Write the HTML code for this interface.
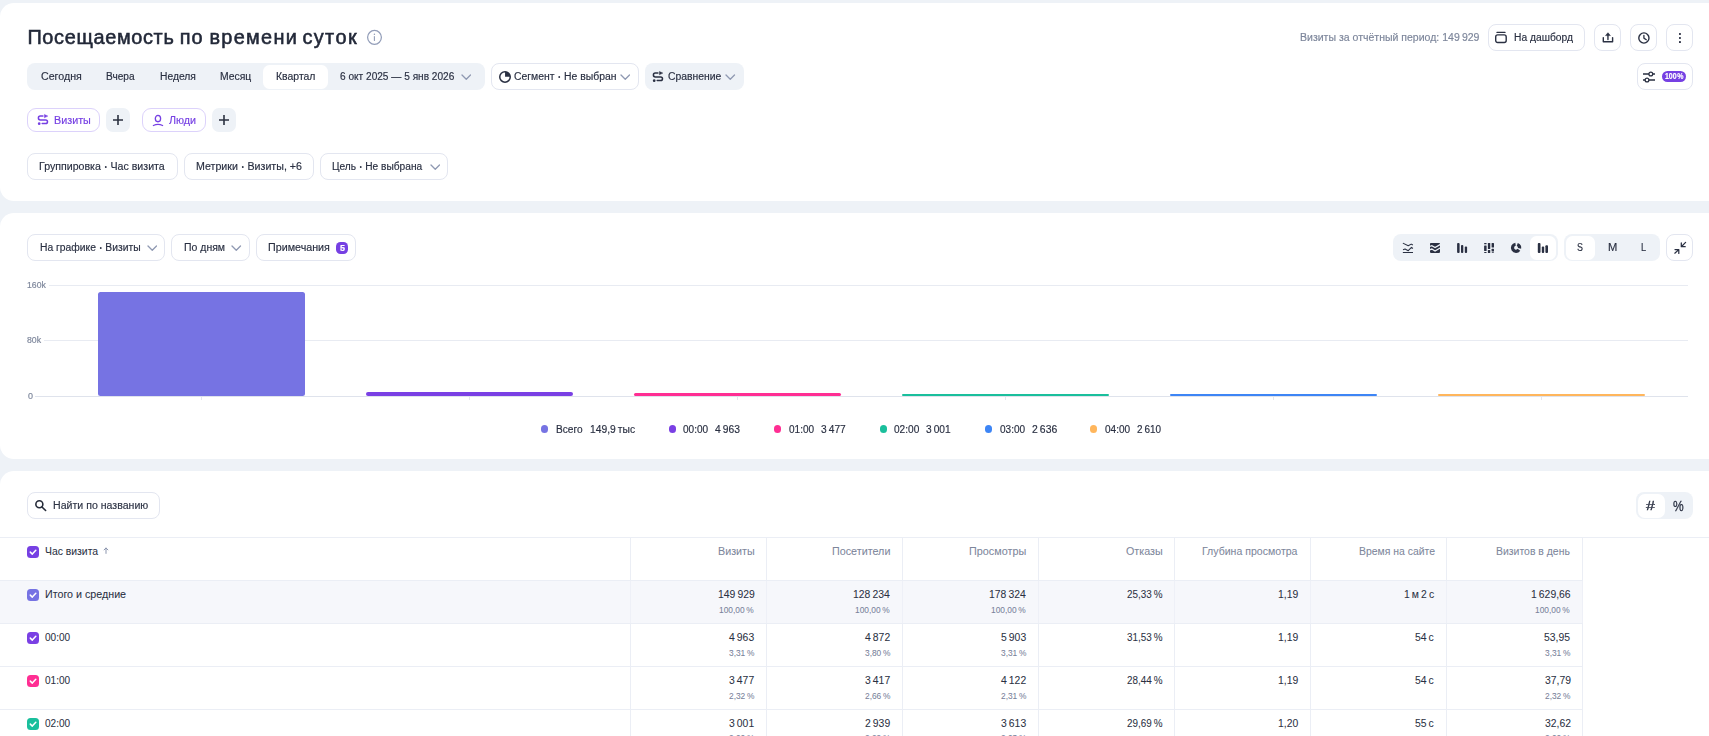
<!DOCTYPE html>
<html lang="ru"><head><meta charset="utf-8"><title>Посещаемость по времени суток</title>
<style>
html,body{margin:0;padding:0;}
html{background:#eef2f7;overflow:hidden;}
body{width:1709px;height:736px;overflow:hidden;background:#eef2f7;position:relative;font-family:"Liberation Sans", sans-serif;}
.b{position:absolute;box-sizing:border-box;display:block;}
.txt{position:absolute;left:0;top:0;width:1709px;height:530px;will-change:transform;}
.tbl{position:absolute;left:0;top:0;width:1709px;height:736px;}
.bu{font-size:.55em;line-height:0;position:relative;top:-1.3px;margin:0 .9px;}
.t{position:absolute;white-space:pre;transform-origin:0 0;line-height:16px;height:16px;font-family:"Liberation Sans", sans-serif;}
</style></head><body>
<div class="b " style="left:0px;top:3px;width:1729px;height:198px;background:#fff;border-radius:14px 0 0 14px;"></div>
<div class="b " style="left:0px;top:213px;width:1729px;height:246px;background:#fff;border-radius:14px 0 0 14px;"></div>
<div class="b " style="left:0px;top:471px;width:1729px;height:300px;background:#fff;border-radius:14px 0 0 0;"></div>
<svg class="b" style="left:366px;top:29px;" width="17" height="17" viewBox="0 0 17 17"><circle cx="8.5" cy="8.35" r="6.9" fill="none" stroke="#939eb9" stroke-width="1.25"/><rect x="7.85" y="6.9" width="1.15" height="5.2" rx="0.5" fill="#98a2bb"/><rect x="7.75" y="4.6" width="1.35" height="1.4" rx="0.6" fill="#98a2bb"/></svg>
<div class="b " style="left:27px;top:63px;width:458px;height:27px;background:#eef2f7;border-radius:8px;"></div>
<div class="b " style="left:263px;top:65px;width:65px;height:23.5px;background:#fff;border-radius:6.5px;"></div>
<svg class="b" style="left:460.95px;top:73.9px;" width="10.5" height="6.2" viewBox="0 0 10.5 6.2"><path d="M1 1 L5.25 5.2 L9.5 1" fill="none" stroke="#8f99b2" stroke-width="1.3" stroke-linecap="round" stroke-linejoin="round"/></svg>
<div class="b " style="left:491px;top:63px;width:148px;height:27px;background:#fff;border:1px solid #e3e6f0;border-radius:8px;"></div>
<svg class="b" style="left:498px;top:70px;" width="14" height="14" viewBox="0 0 14 14"><circle cx="7" cy="6.9" r="5.25" fill="none" stroke="#2a3042" stroke-width="1.5"/><path d="M7.05 6.7 L7.05 1.6 A5.2 5.2 0 0 1 12.2 6.7 Z" fill="#2a3042"/></svg>
<svg class="b" style="left:619.95px;top:73.9px;" width="10.5" height="6.2" viewBox="0 0 10.5 6.2"><path d="M1 1 L5.25 5.2 L9.5 1" fill="none" stroke="#8f99b2" stroke-width="1.3" stroke-linecap="round" stroke-linejoin="round"/></svg>
<div class="b " style="left:645px;top:63px;width:99px;height:27px;background:#eef2f7;border-radius:8px;"></div>
<svg class="b" style="left:652.2px;top:70.1px;" width="12" height="13" viewBox="0 0 12 13"><path d="M5.9 3.1H3.3A1.9 1.9 0 0 0 3.3 6.9H8.7A1.8 1.8 0 0 1 8.7 10.5H5.2" fill="none" stroke="#2a3042" stroke-width="1.5" stroke-linecap="round"/><circle cx="2.2" cy="10.7" r="1.35" fill="#2a3042"/><path d="M7.4 1.4V4.8L10.9 3.1Z" fill="#2a3042" stroke="#2a3042" stroke-width="0.4" stroke-linejoin="round"/></svg>
<svg class="b" style="left:725.05px;top:73.9px;" width="10.5" height="6.2" viewBox="0 0 10.5 6.2"><path d="M1 1 L5.25 5.2 L9.5 1" fill="none" stroke="#8f99b2" stroke-width="1.3" stroke-linecap="round" stroke-linejoin="round"/></svg>
<div class="b " style="left:27px;top:108px;width:73px;height:24px;background:#fff;border:1px solid #dcd2fb;border-radius:9px;"></div>
<svg class="b" style="left:37px;top:113px;" width="12" height="13" viewBox="0 0 12 13"><path d="M5.9 3.1H3.3A1.9 1.9 0 0 0 3.3 6.9H8.7A1.8 1.8 0 0 1 8.7 10.5H5.2" fill="none" stroke="#7640e3" stroke-width="1.5" stroke-linecap="round"/><circle cx="2.2" cy="10.7" r="1.35" fill="#7640e3"/><path d="M7.4 1.4V4.8L10.9 3.1Z" fill="#7640e3" stroke="#7640e3" stroke-width="0.4" stroke-linejoin="round"/></svg>
<div class="b " style="left:106px;top:108px;width:24px;height:24px;background:#eef2f7;border-radius:7px;"></div>
<svg class="b" style="left:111.8px;top:114px;" width="12" height="12" viewBox="0 0 12 12"><path d="M6 1V11M1 6H11" stroke="#2b3140" stroke-width="1.6" fill="none"/></svg>
<div class="b " style="left:142px;top:108px;width:64px;height:24px;background:#fff;border:1px solid #dcd2fb;border-radius:9px;"></div>
<svg class="b" style="left:152px;top:113px;" width="13" height="14" viewBox="0 0 13 14"><ellipse cx="5.96" cy="5.56" rx="2.65" ry="3.2" fill="none" stroke="#7640e3" stroke-width="1.3"/><path d="M1.4 12.5Q6 10.3 10.6 12.5" fill="none" stroke="#7640e3" stroke-width="1.3" stroke-linecap="round"/></svg>
<div class="b " style="left:212px;top:108px;width:24px;height:24px;background:#eef2f7;border-radius:7px;"></div>
<svg class="b" style="left:217.9px;top:114px;" width="12" height="12" viewBox="0 0 12 12"><path d="M6 1V11M1 6H11" stroke="#2b3140" stroke-width="1.6" fill="none"/></svg>
<div class="b " style="left:27px;top:153px;width:151px;height:27px;background:#fff;border:1px solid #e3e6f0;border-radius:8px;"></div>
<div class="b " style="left:184px;top:153px;width:130px;height:27px;background:#fff;border:1px solid #e3e6f0;border-radius:8px;"></div>
<div class="b " style="left:320px;top:153px;width:128px;height:27px;background:#fff;border:1px solid #e3e6f0;border-radius:8px;"></div>
<svg class="b" style="left:429.75px;top:163.9px;" width="10.5" height="6.2" viewBox="0 0 10.5 6.2"><path d="M1 1 L5.25 5.2 L9.5 1" fill="none" stroke="#8f99b2" stroke-width="1.3" stroke-linecap="round" stroke-linejoin="round"/></svg>
<div class="b " style="left:1488px;top:24px;width:97px;height:27px;background:#fff;border:1px solid #e3e6f0;border-radius:8px;"></div>
<svg class="b" style="left:1494px;top:31px;" width="14" height="14" viewBox="0 0 14 14"><rect x="1.7" y="3.9" width="10.5" height="7.6" rx="2" fill="none" stroke="#2a3042" stroke-width="1.4"/><path d="M3 1.4H11" stroke="#2a3042" stroke-width="1.3" stroke-linecap="round"/></svg>
<div class="b " style="left:1594px;top:24px;width:27px;height:27px;background:#fff;border:1px solid #e3e6f0;border-radius:8px;"></div>
<div class="b " style="left:1630px;top:24px;width:27px;height:27px;background:#fff;border:1px solid #e3e6f0;border-radius:8px;"></div>
<div class="b " style="left:1666px;top:24px;width:27px;height:27px;background:#fff;border:1px solid #e3e6f0;border-radius:8px;"></div>
<svg class="b" style="left:1601px;top:31px;" width="14" height="14" viewBox="0 0 14 14"><path d="M2.3 6.6V10.7H11.6V6.6" fill="none" stroke="#2a3042" stroke-width="1.4" stroke-linejoin="round" stroke-linecap="round"/><path d="M6.95 8.6V3.2" stroke="#2a3042" stroke-width="1.4" stroke-linecap="round"/><path d="M4.5 4.6L6.95 1.7L9.4 4.6Z" fill="#2a3042" stroke="#2a3042" stroke-width="0.5" stroke-linejoin="round"/></svg>
<svg class="b" style="left:1637px;top:31px;" width="14" height="14" viewBox="0 0 14 14"><circle cx="6.9" cy="7" r="5.1" fill="none" stroke="#2a3042" stroke-width="1.4"/><path d="M6.9 4.3V7.1L9.3 8.7" fill="none" stroke="#2a3042" stroke-width="1.3" stroke-linecap="round" stroke-linejoin="round"/></svg>
<svg class="b" style="left:1673px;top:31px;" width="14" height="14" viewBox="0 0 14 14"><rect x="6" y="2" width="1.9" height="1.9" rx="0.6" fill="#2a3042"/><rect x="6" y="6.05" width="1.9" height="1.9" rx="0.6" fill="#2a3042"/><rect x="6" y="10.1" width="1.9" height="1.9" rx="0.6" fill="#2a3042"/></svg>
<div class="b " style="left:1637px;top:63px;width:56px;height:27px;background:#fff;border:1px solid #e3e6f0;border-radius:8px;"></div>
<svg class="b" style="left:1642px;top:70px;" width="14" height="14" viewBox="0 0 14 14"><path d="M1 4H13M1 10H13" stroke="#2a3042" stroke-width="1.3"/><circle cx="8.8" cy="4" r="1.9" fill="#fff" stroke="#2a3042" stroke-width="1.3"/><circle cx="5" cy="10" r="1.9" fill="#fff" stroke="#2a3042" stroke-width="1.3"/></svg>
<div class="b " style="left:1662px;top:71px;width:24px;height:11px;background:#7640e3;border-radius:5.5px;"></div>
<div class="b " style="left:27px;top:234px;width:138px;height:27px;background:#fff;border:1px solid #e3e6f0;border-radius:8px;"></div>
<svg class="b" style="left:146.75px;top:244.9px;" width="10.5" height="6.2" viewBox="0 0 10.5 6.2"><path d="M1 1 L5.25 5.2 L9.5 1" fill="none" stroke="#8f99b2" stroke-width="1.3" stroke-linecap="round" stroke-linejoin="round"/></svg>
<div class="b " style="left:171px;top:234px;width:79px;height:27px;background:#fff;border:1px solid #e3e6f0;border-radius:8px;"></div>
<svg class="b" style="left:231.25px;top:244.9px;" width="10.5" height="6.2" viewBox="0 0 10.5 6.2"><path d="M1 1 L5.25 5.2 L9.5 1" fill="none" stroke="#8f99b2" stroke-width="1.3" stroke-linecap="round" stroke-linejoin="round"/></svg>
<div class="b " style="left:256px;top:234px;width:100px;height:27px;background:#fff;border:1px solid #e3e6f0;border-radius:8px;"></div>
<div class="b " style="left:335.9px;top:242px;width:11.9px;height:11.9px;background:#7640e3;border-radius:4.5px;"></div>
<div class="b " style="left:1393px;top:234px;width:164.5px;height:27px;background:#eef2f7;border-radius:8px;"></div>
<div class="b " style="left:1529.5px;top:236px;width:26.5px;height:23.5px;background:#fff;border-radius:6.5px;"></div>
<div class="b " style="left:1564px;top:234px;width:96px;height:27px;background:#eef2f7;border-radius:8px;"></div>
<div class="b " style="left:1565.5px;top:236px;width:29px;height:23.5px;background:#fff;border-radius:6.5px;"></div>
<div class="b " style="left:1666px;top:234px;width:27px;height:27px;background:#fff;border:1px solid #e3e6f0;border-radius:8px;"></div>
<svg class="b" style="left:1393px;top:234px;" width="165" height="27" viewBox="0 0 165 27"><path d="M9.85 9.10 L15.25 11.80 L18.20 10.10 L19.90 11.05" fill="none" stroke="#2a3042" stroke-width="1.05" stroke-linejoin="round"/><path d="M10.00 15.70 L12.05 15.00 L15.25 16.70 L18.45 13.30 L19.90 14.50" fill="none" stroke="#2a3042" stroke-width="1.05" stroke-linejoin="round"/><path d="M9.85 18.50 L20.00 18.50" fill="none" stroke="#2a3042" stroke-width="1"/><rect x="37" y="9" width="10" height="9.9" rx="0.8" fill="#2a3042"/><path d="M36.50 12.50 L38.85 11.60 L42.05 13.55 L47.50 10.40" fill="none" stroke="#eef2f7" stroke-width="1.25"/><path d="M36.50 15.95 L38.85 15.05 L42.05 16.95 L47.50 13.75" fill="none" stroke="#eef2f7" stroke-width="1.25"/><rect x="64.10" y="9.10" width="2.50" height="9.90" rx="0.9" fill="#2a3042"/><rect x="68.00" y="11.00" width="2.30" height="8.00" rx="0.9" fill="#2a3042"/><rect x="71.80" y="12.50" width="2.30" height="6.50" rx="0.9" fill="#2a3042"/><rect x="91.10" y="9.00" width="2.50" height="1.30" rx="0.5" fill="#2a3042"/><rect x="91.10" y="11.40" width="2.50" height="5.60" rx="0.5" fill="#2a3042"/><rect x="91.10" y="17.90" width="2.50" height="1.10" rx="0.5" fill="#2a3042"/><rect x="94.90" y="9.00" width="2.35" height="5.90" rx="0.5" fill="#2a3042"/><rect x="94.90" y="16.00" width="2.35" height="3.00" rx="0.5" fill="#2a3042"/><rect x="98.60" y="9.00" width="2.40" height="4.60" rx="0.5" fill="#2a3042"/><rect x="98.60" y="14.80" width="2.40" height="2.80" rx="0.5" fill="#2a3042"/><rect x="98.60" y="18.30" width="2.40" height="0.70" rx="0.5" fill="#2a3042"/><path d="M124.26 10.41A3.55 3.55 0 0 1 126.55 14.37" fill="none" stroke="#2a3042" stroke-width="3.2"/><path d="M125.96 15.79A3.55 3.55 0 1 1 122.56 10.23" fill="none" stroke="#2a3042" stroke-width="3.2"/><rect x="144.80" y="9.10" width="2.70" height="9.90" rx="0.9" fill="#2a3042"/><rect x="148.80" y="12.50" width="2.40" height="6.50" rx="0.9" fill="#2a3042"/><rect x="152.40" y="11.30" width="2.60" height="7.70" rx="0.9" fill="#2a3042"/></svg>
<svg class="b" style="left:1666px;top:234px;" width="27" height="27" viewBox="0 0 27 27"><g fill="none" stroke="#2a3042" stroke-width="1.25" stroke-linecap="round" stroke-linejoin="round"><path d="M19.6 8.4L15.3 12.7M15.3 8.9V12.7H19.2"/><path d="M8.8 19.2L12.8 15.6M9 15.6H12.8V19.4"/></g></svg>
<div class="b " style="left:49px;top:285px;width:1639px;height:1px;background:#e8ebf2;"></div>
<div class="b " style="left:44px;top:340px;width:1644px;height:1px;background:#e8ebf2;"></div>
<div class="b " style="left:35px;top:396px;width:1653px;height:1px;background:#dfe3ec;"></div>
<div class="b " style="left:97.6px;top:291.5px;width:207.6px;height:104.5px;background:#7673e3;border-radius:2.5px;"></div>
<div class="b " style="left:200.9px;top:397px;width:1px;height:3px;background:#e4e7ee;"></div>
<div class="b " style="left:365.9px;top:392px;width:207.6px;height:4px;background:#7a40e4;border-radius:2px;"></div>
<div class="b " style="left:469.2px;top:397px;width:1px;height:3px;background:#e4e7ee;"></div>
<div class="b " style="left:633.8px;top:393.4px;width:207.6px;height:2.6px;background:#ff2e93;border-radius:2px;"></div>
<div class="b " style="left:737.1px;top:397px;width:1px;height:3px;background:#e4e7ee;"></div>
<div class="b " style="left:901.8px;top:393.7px;width:207.6px;height:2.3px;background:#1abf9c;border-radius:2px;"></div>
<div class="b " style="left:1005.1px;top:397px;width:1px;height:3px;background:#e4e7ee;"></div>
<div class="b " style="left:1169.5px;top:394px;width:207.6px;height:2px;background:#3d85f5;border-radius:2px;"></div>
<div class="b " style="left:1272.8px;top:397px;width:1px;height:3px;background:#e4e7ee;"></div>
<div class="b " style="left:1437.8px;top:394px;width:207.6px;height:2px;background:#ffb65c;border-radius:2px;"></div>
<div class="b " style="left:1541.1px;top:397px;width:1px;height:3px;background:#e4e7ee;"></div>
<div class="b " style="left:540.6px;top:425.4px;width:7.4px;height:7.4px;background:#7673e3;border-radius:4px;"></div>
<div class="b " style="left:668.9px;top:425.4px;width:7.4px;height:7.4px;background:#7a40e4;border-radius:4px;"></div>
<div class="b " style="left:774.0px;top:425.4px;width:7.4px;height:7.4px;background:#ff2e93;border-radius:4px;"></div>
<div class="b " style="left:879.8px;top:425.4px;width:7.4px;height:7.4px;background:#1abf9c;border-radius:4px;"></div>
<div class="b " style="left:984.9px;top:425.4px;width:7.4px;height:7.4px;background:#3d85f5;border-radius:4px;"></div>
<div class="b " style="left:1090.1px;top:425.4px;width:7.4px;height:7.4px;background:#ffb65c;border-radius:4px;"></div>
<div class="b " style="left:27px;top:492px;width:133px;height:27px;background:#fff;border:1px solid #e3e6f0;border-radius:8px;"></div>
<svg class="b" style="left:34px;top:499px;" width="14" height="14" viewBox="0 0 14 14"><circle cx="5.36" cy="5.3" r="3.5" fill="none" stroke="#262c3a" stroke-width="1.6"/><path d="M8 7.95L11.6 11.5" stroke="#262c3a" stroke-width="1.6" stroke-linecap="round"/></svg>
<div class="b " style="left:1636px;top:492px;width:57px;height:27px;background:#eef2f7;border-radius:8px;"></div>
<div class="b " style="left:1637.7px;top:493.7px;width:27.4px;height:24.3px;background:#fff;border-radius:7px;"></div>
<div class="b " style="left:0px;top:581px;width:1582px;height:42px;background:#f6f7fb;"></div>
<div class="b " style="left:0px;top:537px;width:1709px;height:1px;background:#ebeef5;"></div>
<div class="b " style="left:0px;top:580px;width:1583px;height:1px;background:#ebeef5;"></div>
<div class="b " style="left:0px;top:623px;width:1583px;height:1px;background:#ebeef5;"></div>
<div class="b " style="left:0px;top:666px;width:1583px;height:1px;background:#ebeef5;"></div>
<div class="b " style="left:0px;top:709px;width:1583px;height:1px;background:#ebeef5;"></div>
<div class="b " style="left:630px;top:538px;width:1px;height:200px;background:#ebeef5;"></div>
<div class="b " style="left:630px;top:581px;width:1px;height:42px;background:#eef0f7;"></div>
<div class="b " style="left:766px;top:538px;width:1px;height:200px;background:#ebeef5;"></div>
<div class="b " style="left:766px;top:581px;width:1px;height:42px;background:#eef0f7;"></div>
<div class="b " style="left:902px;top:538px;width:1px;height:200px;background:#ebeef5;"></div>
<div class="b " style="left:902px;top:581px;width:1px;height:42px;background:#eef0f7;"></div>
<div class="b " style="left:1038px;top:538px;width:1px;height:200px;background:#ebeef5;"></div>
<div class="b " style="left:1038px;top:581px;width:1px;height:42px;background:#eef0f7;"></div>
<div class="b " style="left:1174px;top:538px;width:1px;height:200px;background:#ebeef5;"></div>
<div class="b " style="left:1174px;top:581px;width:1px;height:42px;background:#eef0f7;"></div>
<div class="b " style="left:1310px;top:538px;width:1px;height:200px;background:#ebeef5;"></div>
<div class="b " style="left:1310px;top:581px;width:1px;height:42px;background:#eef0f7;"></div>
<div class="b " style="left:1446px;top:538px;width:1px;height:200px;background:#ebeef5;"></div>
<div class="b " style="left:1446px;top:581px;width:1px;height:42px;background:#eef0f7;"></div>
<div class="b " style="left:1582px;top:538px;width:1px;height:200px;background:#ebeef5;"></div>
<div class="b " style="left:1582px;top:581px;width:1px;height:42px;background:#eef0f7;"></div>
<div class="b " style="left:27px;top:546px;width:12px;height:12px;background:#7640e3;border-radius:3.5px;"></div>
<svg class="b" style="left:27px;top:546px;" width="12" height="12" viewBox="0 0 12 12"><path d="M3.3 6.1L5.3 8.1L8.8 4.3" fill="none" stroke="#fff" stroke-width="1.5" stroke-linecap="round" stroke-linejoin="round"/></svg>
<svg class="b" style="left:102px;top:546px;" width="8" height="10" viewBox="0 0 8 10"><path d="M4 7.4V2.1M2.1 3.9L4 1.95L5.9 3.9" fill="none" stroke="#8b95ae" stroke-width="1" stroke-linecap="round" stroke-linejoin="round"/></svg>
<div class="b " style="left:27px;top:589px;width:12px;height:12px;background:#7673e3;border-radius:3.5px;"></div>
<svg class="b" style="left:27px;top:589px;" width="12" height="12" viewBox="0 0 12 12"><path d="M3.3 6.1L5.3 8.1L8.8 4.3" fill="none" stroke="#fff" stroke-width="1.5" stroke-linecap="round" stroke-linejoin="round"/></svg>
<div class="b " style="left:27px;top:632px;width:12px;height:12px;background:#7a40e4;border-radius:3.5px;"></div>
<svg class="b" style="left:27px;top:632px;" width="12" height="12" viewBox="0 0 12 12"><path d="M3.3 6.1L5.3 8.1L8.8 4.3" fill="none" stroke="#fff" stroke-width="1.5" stroke-linecap="round" stroke-linejoin="round"/></svg>
<div class="b " style="left:27px;top:675px;width:12px;height:12px;background:#ff2e93;border-radius:3.5px;"></div>
<svg class="b" style="left:27px;top:675px;" width="12" height="12" viewBox="0 0 12 12"><path d="M3.3 6.1L5.3 8.1L8.8 4.3" fill="none" stroke="#fff" stroke-width="1.5" stroke-linecap="round" stroke-linejoin="round"/></svg>
<div class="b " style="left:27px;top:718px;width:12px;height:12px;background:#1abf9c;border-radius:3.5px;"></div>
<svg class="b" style="left:27px;top:718px;" width="12" height="12" viewBox="0 0 12 12"><path d="M3.3 6.1L5.3 8.1L8.8 4.3" fill="none" stroke="#fff" stroke-width="1.5" stroke-linecap="round" stroke-linejoin="round"/></svg>
<div class="tbl">
<span class="t" style="left:45.40px;top:543px;font-size:11.7px;color:#2a3042;transform:scaleX(0.8883);-webkit-text-stroke:0.06px #2a3042;">Час визита</span>
<span class="t" style="left:717.80px;top:543px;font-size:11.7px;color:#7d869b;transform:scaleX(0.9175);-webkit-text-stroke:0.06px #7d869b;">Визиты</span>
<span class="t" style="left:832.20px;top:543px;font-size:11.7px;color:#7d869b;transform:scaleX(0.9207);-webkit-text-stroke:0.06px #7d869b;">Посетители</span>
<span class="t" style="left:969.20px;top:543px;font-size:11.7px;color:#7d869b;transform:scaleX(0.9271);-webkit-text-stroke:0.06px #7d869b;">Просмотры</span>
<span class="t" style="left:1125.80px;top:543px;font-size:11.7px;color:#7d869b;transform:scaleX(0.9180);-webkit-text-stroke:0.06px #7d869b;">Отказы</span>
<span class="t" style="left:1202.20px;top:543px;font-size:11.7px;color:#7d869b;transform:scaleX(0.9031);-webkit-text-stroke:0.06px #7d869b;">Глубина просмотра</span>
<span class="t" style="left:1358.60px;top:543px;font-size:11.7px;color:#7d869b;transform:scaleX(0.8914);-webkit-text-stroke:0.06px #7d869b;">Время на сайте</span>
<span class="t" style="left:1496.30px;top:543px;font-size:11.7px;color:#7d869b;transform:scaleX(0.8933);-webkit-text-stroke:0.06px #7d869b;">Визитов в день</span>
<span class="t" style="left:45.40px;top:586px;font-size:11.7px;color:#2a3042;transform:scaleX(0.9155);-webkit-text-stroke:0.06px #2a3042;">Итого и средние</span>
<span class="t" style="left:717.93px;top:586px;font-size:11.7px;color:#2a3042;transform:scaleX(0.8880);-webkit-text-stroke:0.06px #2a3042;">149 929</span>
<span class="t" style="left:719.36px;top:602px;font-size:9.9px;color:#78819a;transform:scaleX(0.8460);-webkit-text-stroke:0.06px #78819a;">100,00 %</span>
<span class="t" style="left:853.05px;top:586px;font-size:11.7px;color:#2a3042;transform:scaleX(0.8880);-webkit-text-stroke:0.06px #2a3042;">128 234</span>
<span class="t" style="left:855.36px;top:602px;font-size:9.9px;color:#78819a;transform:scaleX(0.8460);-webkit-text-stroke:0.06px #78819a;">100,00 %</span>
<span class="t" style="left:989.05px;top:586px;font-size:11.7px;color:#2a3042;transform:scaleX(0.8880);-webkit-text-stroke:0.06px #2a3042;">178 324</span>
<span class="t" style="left:991.36px;top:602px;font-size:9.9px;color:#78819a;transform:scaleX(0.8460);-webkit-text-stroke:0.06px #78819a;">100,00 %</span>
<span class="t" style="left:1127.02px;top:586px;font-size:11.7px;color:#2a3042;transform:scaleX(0.8460);-webkit-text-stroke:0.06px #2a3042;">25,33 %</span>
<span class="t" style="left:1278.44px;top:586px;font-size:11.7px;color:#2a3042;transform:scaleX(0.8880);-webkit-text-stroke:0.06px #2a3042;">1,19</span>
<span class="t" style="left:1403.96px;top:586px;font-size:11.7px;color:#2a3042;transform:scaleX(0.8880);-webkit-text-stroke:0.06px #2a3042;">1 м 2 с</span>
<span class="t" style="left:1531.05px;top:586px;font-size:11.7px;color:#2a3042;transform:scaleX(0.8880);-webkit-text-stroke:0.06px #2a3042;">1 629,66</span>
<span class="t" style="left:1535.36px;top:602px;font-size:9.9px;color:#78819a;transform:scaleX(0.8460);-webkit-text-stroke:0.06px #78819a;">100,00 %</span>
<span class="t" style="left:45.40px;top:629px;font-size:11.7px;color:#2a3042;transform:scaleX(0.8606);-webkit-text-stroke:0.06px #2a3042;">00:00</span>
<span class="t" style="left:729.48px;top:629px;font-size:11.7px;color:#2a3042;transform:scaleX(0.8880);-webkit-text-stroke:0.06px #2a3042;">4 963</span>
<span class="t" style="left:728.65px;top:645px;font-size:9.9px;color:#78819a;transform:scaleX(0.8460);-webkit-text-stroke:0.06px #78819a;">3,31 %</span>
<span class="t" style="left:865.48px;top:629px;font-size:11.7px;color:#2a3042;transform:scaleX(0.8880);-webkit-text-stroke:0.06px #2a3042;">4 872</span>
<span class="t" style="left:864.65px;top:645px;font-size:9.9px;color:#78819a;transform:scaleX(0.8460);-webkit-text-stroke:0.06px #78819a;">3,80 %</span>
<span class="t" style="left:1001.48px;top:629px;font-size:11.7px;color:#2a3042;transform:scaleX(0.8880);-webkit-text-stroke:0.06px #2a3042;">5 903</span>
<span class="t" style="left:1000.65px;top:645px;font-size:9.9px;color:#78819a;transform:scaleX(0.8460);-webkit-text-stroke:0.06px #78819a;">3,31 %</span>
<span class="t" style="left:1127.02px;top:629px;font-size:11.7px;color:#2a3042;transform:scaleX(0.8460);-webkit-text-stroke:0.06px #2a3042;">31,53 %</span>
<span class="t" style="left:1278.44px;top:629px;font-size:11.7px;color:#2a3042;transform:scaleX(0.8880);-webkit-text-stroke:0.06px #2a3042;">1,19</span>
<span class="t" style="left:1415.25px;top:629px;font-size:11.7px;color:#2a3042;transform:scaleX(0.8880);-webkit-text-stroke:0.06px #2a3042;">54 с</span>
<span class="t" style="left:1543.78px;top:629px;font-size:11.7px;color:#2a3042;transform:scaleX(0.8880);-webkit-text-stroke:0.06px #2a3042;">53,95</span>
<span class="t" style="left:1544.65px;top:645px;font-size:9.9px;color:#78819a;transform:scaleX(0.8460);-webkit-text-stroke:0.06px #78819a;">3,31 %</span>
<span class="t" style="left:45.40px;top:672px;font-size:11.7px;color:#2a3042;transform:scaleX(0.8606);-webkit-text-stroke:0.06px #2a3042;">01:00</span>
<span class="t" style="left:729.48px;top:672px;font-size:11.7px;color:#2a3042;transform:scaleX(0.8880);-webkit-text-stroke:0.06px #2a3042;">3 477</span>
<span class="t" style="left:728.65px;top:688px;font-size:9.9px;color:#78819a;transform:scaleX(0.8460);-webkit-text-stroke:0.06px #78819a;">2,32 %</span>
<span class="t" style="left:865.48px;top:672px;font-size:11.7px;color:#2a3042;transform:scaleX(0.8880);-webkit-text-stroke:0.06px #2a3042;">3 417</span>
<span class="t" style="left:864.65px;top:688px;font-size:9.9px;color:#78819a;transform:scaleX(0.8460);-webkit-text-stroke:0.06px #78819a;">2,66 %</span>
<span class="t" style="left:1001.48px;top:672px;font-size:11.7px;color:#2a3042;transform:scaleX(0.8880);-webkit-text-stroke:0.06px #2a3042;">4 122</span>
<span class="t" style="left:1000.65px;top:688px;font-size:9.9px;color:#78819a;transform:scaleX(0.8460);-webkit-text-stroke:0.06px #78819a;">2,31 %</span>
<span class="t" style="left:1127.02px;top:672px;font-size:11.7px;color:#2a3042;transform:scaleX(0.8460);-webkit-text-stroke:0.06px #2a3042;">28,44 %</span>
<span class="t" style="left:1278.44px;top:672px;font-size:11.7px;color:#2a3042;transform:scaleX(0.8880);-webkit-text-stroke:0.06px #2a3042;">1,19</span>
<span class="t" style="left:1415.25px;top:672px;font-size:11.7px;color:#2a3042;transform:scaleX(0.8880);-webkit-text-stroke:0.06px #2a3042;">54 с</span>
<span class="t" style="left:1544.67px;top:672px;font-size:11.7px;color:#2a3042;transform:scaleX(0.8880);-webkit-text-stroke:0.06px #2a3042;">37,79</span>
<span class="t" style="left:1544.65px;top:688px;font-size:9.9px;color:#78819a;transform:scaleX(0.8460);-webkit-text-stroke:0.06px #78819a;">2,32 %</span>
<span class="t" style="left:45.40px;top:715px;font-size:11.7px;color:#2a3042;transform:scaleX(0.8606);-webkit-text-stroke:0.06px #2a3042;">02:00</span>
<span class="t" style="left:729.48px;top:715px;font-size:11.7px;color:#2a3042;transform:scaleX(0.8880);-webkit-text-stroke:0.06px #2a3042;">3 001</span>
<span class="t" style="left:728.65px;top:730px;font-size:9.9px;color:#78819a;transform:scaleX(0.8460);-webkit-text-stroke:0.06px #78819a;">2,00 %</span>
<span class="t" style="left:865.48px;top:715px;font-size:11.7px;color:#2a3042;transform:scaleX(0.8880);-webkit-text-stroke:0.06px #2a3042;">2 939</span>
<span class="t" style="left:864.65px;top:730px;font-size:9.9px;color:#78819a;transform:scaleX(0.8460);-webkit-text-stroke:0.06px #78819a;">2,29 %</span>
<span class="t" style="left:1001.48px;top:715px;font-size:11.7px;color:#2a3042;transform:scaleX(0.8880);-webkit-text-stroke:0.06px #2a3042;">3 613</span>
<span class="t" style="left:1000.65px;top:730px;font-size:9.9px;color:#78819a;transform:scaleX(0.8460);-webkit-text-stroke:0.06px #78819a;">2,03 %</span>
<span class="t" style="left:1127.02px;top:715px;font-size:11.7px;color:#2a3042;transform:scaleX(0.8460);-webkit-text-stroke:0.06px #2a3042;">29,69 %</span>
<span class="t" style="left:1277.56px;top:715px;font-size:11.7px;color:#2a3042;transform:scaleX(0.8880);-webkit-text-stroke:0.06px #2a3042;">1,20</span>
<span class="t" style="left:1415.25px;top:715px;font-size:11.7px;color:#2a3042;transform:scaleX(0.8880);-webkit-text-stroke:0.06px #2a3042;">55 с</span>
<span class="t" style="left:1544.67px;top:715px;font-size:11.7px;color:#2a3042;transform:scaleX(0.8880);-webkit-text-stroke:0.06px #2a3042;">32,62</span>
<span class="t" style="left:1544.65px;top:730px;font-size:9.9px;color:#78819a;transform:scaleX(0.8460);-webkit-text-stroke:0.06px #78819a;">2,00 %</span>
</div>
<div class="txt">
<span class="t" style="left:27.40px;top:29px;font-size:19.9px;color:#222838;letter-spacing:0.668px;-webkit-text-stroke:0.55px #222838;">Посещаемость</span>
<span class="t" style="left:179.80px;top:29px;font-size:19.9px;color:#222838;letter-spacing:0.829px;-webkit-text-stroke:0.55px #222838;">по</span>
<span class="t" style="left:209.40px;top:29px;font-size:19.9px;color:#222838;letter-spacing:1.315px;-webkit-text-stroke:0.55px #222838;">времени</span>
<span class="t" style="left:302.40px;top:29px;font-size:19.9px;color:#222838;letter-spacing:1.415px;-webkit-text-stroke:0.55px #222838;">суток</span>
<span class="t" style="left:40.70px;top:68px;font-size:11.7px;color:#2a3042;transform:scaleX(0.9109);-webkit-text-stroke:0.18px #2a3042;">Сегодня</span>
<span class="t" style="left:106.00px;top:68px;font-size:11.7px;color:#2a3042;transform:scaleX(0.8658);-webkit-text-stroke:0.18px #2a3042;">Вчера</span>
<span class="t" style="left:159.60px;top:68px;font-size:11.7px;color:#2a3042;transform:scaleX(0.8804);-webkit-text-stroke:0.18px #2a3042;">Неделя</span>
<span class="t" style="left:219.70px;top:68px;font-size:11.7px;color:#2a3042;transform:scaleX(0.8891);-webkit-text-stroke:0.18px #2a3042;">Месяц</span>
<span class="t" style="left:275.70px;top:68px;font-size:11.7px;color:#2a3042;transform:scaleX(0.8929);-webkit-text-stroke:0.18px #2a3042;">Квартал</span>
<span class="t" style="left:339.50px;top:68px;font-size:11.7px;color:#2a3042;transform:scaleX(0.8644);-webkit-text-stroke:0.18px #2a3042;">6 окт 2025 — 5 янв 2026</span>
<span class="t" style="left:514.10px;top:68px;font-size:11.7px;color:#2a3042;transform:scaleX(0.8911);-webkit-text-stroke:0.18px #2a3042;">Сегмент <span class=bu>•</span> Не выбран</span>
<span class="t" style="left:668.00px;top:68px;font-size:11.7px;color:#2a3042;transform:scaleX(0.8878);-webkit-text-stroke:0.18px #2a3042;">Сравнение</span>
<span class="t" style="left:53.70px;top:112px;font-size:11.7px;color:#7640e3;transform:scaleX(0.9226);-webkit-text-stroke:0.18px #7640e3;">Визиты</span>
<span class="t" style="left:169.20px;top:112px;font-size:11.7px;color:#7640e3;transform:scaleX(0.9173);-webkit-text-stroke:0.18px #7640e3;">Люди</span>
<span class="t" style="left:39.30px;top:158px;font-size:11.7px;color:#2a3042;transform:scaleX(0.9084);-webkit-text-stroke:0.18px #2a3042;">Группировка <span class=bu>•</span> Час визита</span>
<span class="t" style="left:196.40px;top:158px;font-size:11.7px;color:#2a3042;transform:scaleX(0.9108);-webkit-text-stroke:0.18px #2a3042;">Метрики <span class=bu>•</span> Визиты, +6</span>
<span class="t" style="left:332.30px;top:158px;font-size:11.7px;color:#2a3042;transform:scaleX(0.8699);-webkit-text-stroke:0.18px #2a3042;">Цель <span class=bu>•</span> Не выбрана</span>
<span class="t" style="left:1299.80px;top:29px;font-size:11.7px;color:#7d869b;transform:scaleX(0.9007);-webkit-text-stroke:0.18px #7d869b;">Визиты за отчётный период: 149 929</span>
<span class="t" style="left:1513.60px;top:29px;font-size:11.7px;color:#2a3042;transform:scaleX(0.8780);-webkit-text-stroke:0.18px #2a3042;">На дашборд</span>
<span class="t" style="left:1664.90px;top:69px;font-size:8.2px;color:#fff;transform:scaleX(0.8503);font-weight:700;-webkit-text-stroke:0.18px #fff;">100 %</span>
<span class="t" style="left:39.50px;top:239px;font-size:11.7px;color:#2a3042;transform:scaleX(0.8841);-webkit-text-stroke:0.18px #2a3042;">На графике <span class=bu>•</span> Визиты</span>
<span class="t" style="left:183.50px;top:239px;font-size:11.7px;color:#2a3042;transform:scaleX(0.8962);-webkit-text-stroke:0.18px #2a3042;">По дням</span>
<span class="t" style="left:268.20px;top:239px;font-size:11.7px;color:#2a3042;transform:scaleX(0.9174);-webkit-text-stroke:0.18px #2a3042;">Примечания</span>
<span class="t" style="left:339.80px;top:240px;font-size:8.8px;color:#fff;transform:scaleX(1.0200);font-weight:700;-webkit-text-stroke:0.18px #fff;">5</span>
<span class="t" style="left:1577.20px;top:239px;font-size:11.7px;color:#2a3042;transform:scaleX(0.7625);-webkit-text-stroke:0.18px #2a3042;">S</span>
<span class="t" style="left:1607.90px;top:239px;font-size:11.7px;color:#2a3042;transform:scaleX(0.9556);-webkit-text-stroke:0.18px #2a3042;">M</span>
<span class="t" style="left:1640.70px;top:239px;font-size:11.7px;color:#2a3042;transform:scaleX(0.7857);-webkit-text-stroke:0.18px #2a3042;">L</span>
<span class="t" style="left:27.30px;top:277px;font-size:9.5px;color:#7d869b;transform:scaleX(0.9161);-webkit-text-stroke:0.18px #7d869b;">160k</span>
<span class="t" style="left:27.30px;top:332px;font-size:9.5px;color:#7d869b;transform:scaleX(0.9186);-webkit-text-stroke:0.18px #7d869b;">80k</span>
<span class="t" style="left:27.50px;top:388px;font-size:9.5px;color:#7d869b;transform:scaleX(0.9400);-webkit-text-stroke:0.18px #7d869b;">0</span>
<span class="t" style="left:555.50px;top:421px;font-size:11.7px;color:#2a3042;transform:scaleX(0.8669);-webkit-text-stroke:0.18px #2a3042;">Всего</span>
<span class="t" style="left:589.50px;top:421px;font-size:11.7px;color:#2a3042;transform:scaleX(0.8804);-webkit-text-stroke:0.18px #2a3042;">149,9 тыс</span>
<span class="t" style="left:683.10px;top:421px;font-size:11.7px;color:#2a3042;transform:scaleX(0.8572);-webkit-text-stroke:0.18px #2a3042;">00:00</span>
<span class="t" style="left:715.40px;top:421px;font-size:11.7px;color:#2a3042;transform:scaleX(0.8800);-webkit-text-stroke:0.18px #2a3042;">4 963</span>
<span class="t" style="left:788.70px;top:421px;font-size:11.7px;color:#2a3042;transform:scaleX(0.8572);-webkit-text-stroke:0.18px #2a3042;">01:00</span>
<span class="t" style="left:821.00px;top:421px;font-size:11.7px;color:#2a3042;transform:scaleX(0.8728);-webkit-text-stroke:0.18px #2a3042;">3 477</span>
<span class="t" style="left:894.20px;top:421px;font-size:11.7px;color:#2a3042;transform:scaleX(0.8639);-webkit-text-stroke:0.18px #2a3042;">02:00</span>
<span class="t" style="left:926.20px;top:421px;font-size:11.7px;color:#2a3042;transform:scaleX(0.8693);-webkit-text-stroke:0.18px #2a3042;">3 001</span>
<span class="t" style="left:999.60px;top:421px;font-size:11.7px;color:#2a3042;transform:scaleX(0.8572);-webkit-text-stroke:0.18px #2a3042;">03:00</span>
<span class="t" style="left:1031.80px;top:421px;font-size:11.7px;color:#2a3042;transform:scaleX(0.8908);-webkit-text-stroke:0.18px #2a3042;">2 636</span>
<span class="t" style="left:1104.80px;top:421px;font-size:11.7px;color:#2a3042;transform:scaleX(0.8572);-webkit-text-stroke:0.18px #2a3042;">04:00</span>
<span class="t" style="left:1137.10px;top:421px;font-size:11.7px;color:#2a3042;transform:scaleX(0.8495);-webkit-text-stroke:0.18px #2a3042;">2 610</span>
<span class="t" style="left:52.70px;top:497px;font-size:11.7px;color:#2f3546;transform:scaleX(0.9059);-webkit-text-stroke:0.18px #2f3546;">Найти по названию</span>
<span class="t" style="left:1646.00px;top:498px;font-size:13px;color:#2a3042;transform:scaleX(1.2250);-webkit-text-stroke:0.35px #2a3042;">#</span>
<span class="t" style="left:1672.90px;top:498px;font-size:14px;color:#2a3042;transform:scaleX(0.8583);-webkit-text-stroke:0.3px #2a3042;">%</span>
</div>
</body></html>
